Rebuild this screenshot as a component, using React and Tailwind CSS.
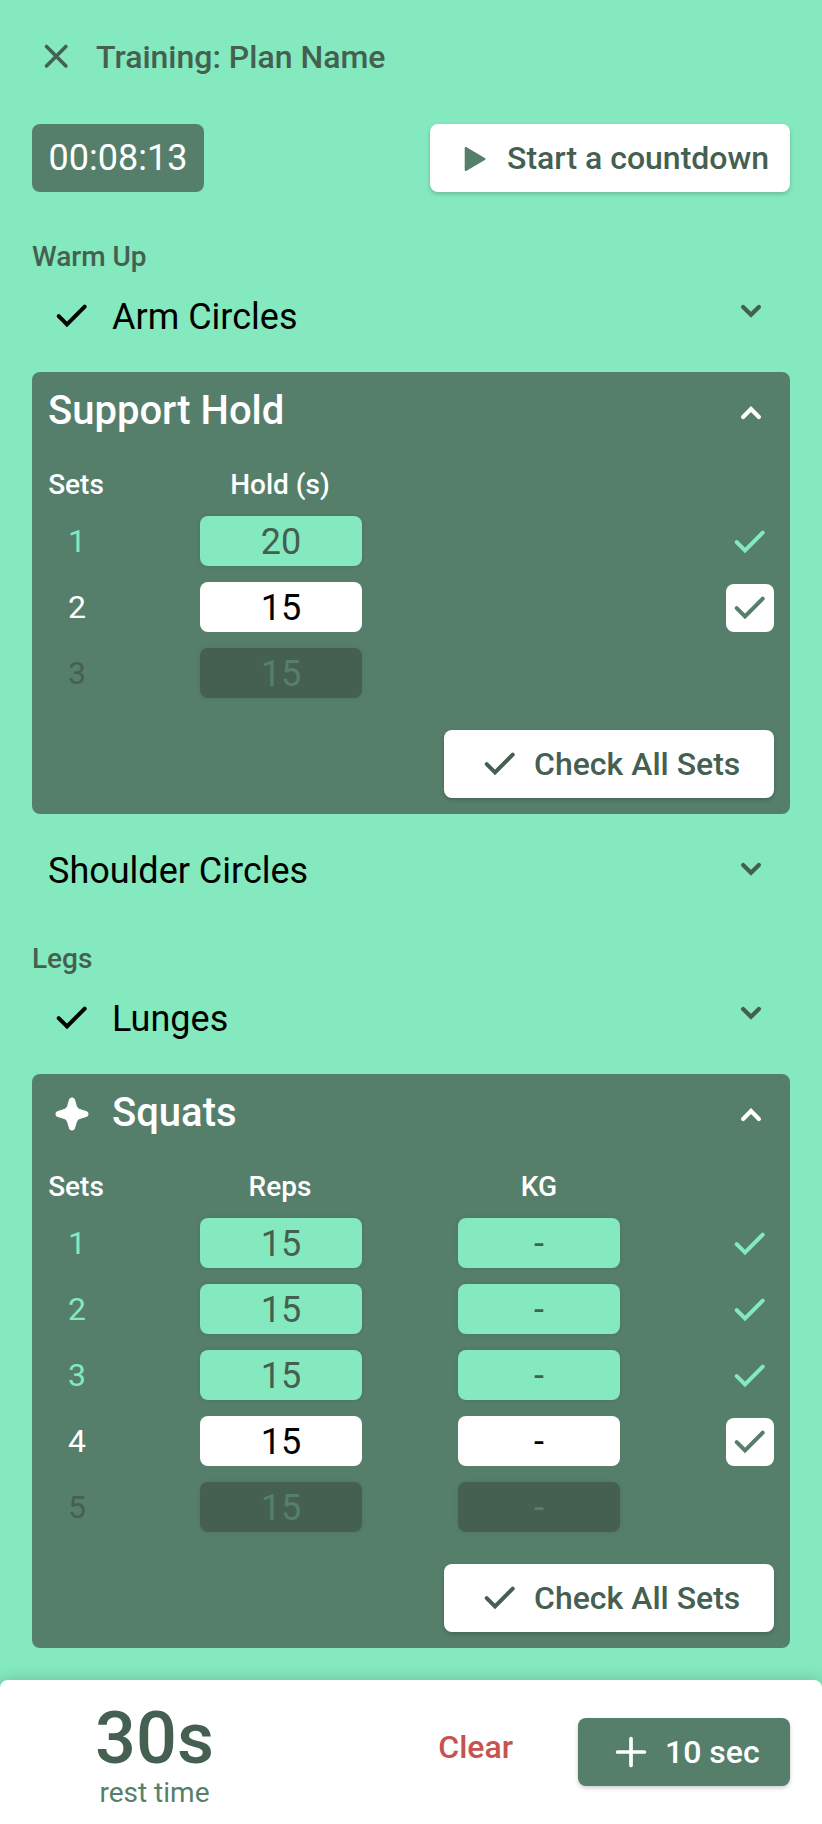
const CheckIcon = ({ className = "" }) => (
  <svg viewBox="0 0 48 48" className={`size-12 shrink-0 ${className}`} fill="none" stroke="currentColor" strokeWidth="4" strokeLinecap="round">
    <path d="M10.7 24.1L19 32.4L36.7 14.7" />
  </svg>
);

const CloseIcon = () => (
  <svg viewBox="0 0 48 48" className="size-12 shrink-0" fill="none" stroke="currentColor" strokeWidth="3.6" strokeLinecap="round">
    <path d="M14.5 14.5L33.9 33.9M33.9 14.5L14.5 33.9" />
  </svg>
);

const PlayIcon = () => (
  <svg viewBox="0 0 48 48" className="size-12 shrink-0 text-[#567f6b]" fill="currentColor" stroke="currentColor" strokeWidth="2" strokeLinejoin="round">
    <path d="M15.7 13.9V36.1L34.7 25Z" />
  </svg>
);

const PlusIcon = () => (
  <svg viewBox="0 0 48 48" className="size-12 shrink-0" fill="none" stroke="currentColor" strokeWidth="3.7" strokeLinecap="round">
    <path d="M10.6 24H37.4M24 10.6V37.4" />
  </svg>
);

const StarIcon = () => (
  <svg viewBox="0 0 48 48" className="size-12 shrink-0" fill="currentColor">
    <path d="M24 7.5C25.7 7.5 26.7 8.6 27.1 9.9L28.7 15.4C29.4 17.7 30.3 18.6 32.6 19.3L38.1 20.9C39.4 21.3 40.5 22.3 40.5 24C40.5 25.7 39.4 26.7 38.1 27.1L32.6 28.7C30.3 29.4 29.4 30.3 28.7 32.6L27.1 38.1C26.7 39.4 25.7 40.5 24 40.5C22.3 40.5 21.3 39.4 20.9 38.1L19.3 32.6C18.6 30.3 17.7 29.4 15.4 28.7L9.9 27.1C8.6 26.7 7.5 25.7 7.5 24C7.5 22.3 8.6 21.3 9.9 20.9L15.4 19.3C17.7 18.6 18.6 17.7 19.3 15.4L20.9 9.9C21.3 8.6 22.3 7.5 24 7.5Z" />
  </svg>
);

const Chevron = ({ up = false, className = "" }) => (
  <svg viewBox="0 0 48 40" className={`h-10 w-12 shrink-0 ${className}`} fill="none" stroke="currentColor" strokeWidth="4.2" strokeLinecap="round">
    <path d={up ? "M17.1 22.9L25 15L32.9 22.9" : "M17.1 14.9L25 22.8L32.9 14.9"} />
  </svg>
);

const SectionLabel = ({ children }) => (
  <h2 className="mt-12 h-8 text-[28px] leading-[34px] font-medium text-[#455f51]">{children}</h2>
);

const CollapsedExercise = ({ name, done = false, className = "" }) => (
  <div className={`flex h-12 items-center justify-between px-4 ${className}`}>
    <div className="flex h-12 items-start gap-4 text-4xl/[50px] text-black">
      {done && <CheckIcon />}
      <span>{name}</span>
    </div>
    <Chevron className={done ? "self-start text-[#455f51]" : "text-[#455f51]"} />
  </div>
);

const cellStyle = {
  done: "bg-[#84e9be] text-[#455f51] shadow-[0_0_4px_rgba(0,0,0,0.12)]",
  active: "bg-white text-black",
  pending: "bg-[#455f51] text-[#567f6b] shadow-[0_0_4px_rgba(0,0,0,0.1)]",
};

const numberStyle = {
  done: "text-[#84e9be]",
  active: "text-white",
  pending: "text-[#455f51]",
};

const grid = "grid grid-cols-[56px_162px_162px_1fr] gap-x-24";

const ExerciseCard = ({ name, star = false, columns, sets }) => (
  <section className="mt-8 rounded-lg bg-[#567f6b] p-4 text-white">
    <div className="flex h-12 items-start gap-4">
      {star && <StarIcon />}
      <h3 className="h-11 grow text-[40px] leading-[46px] font-medium">{name}</h3>
      <Chevron up className="mt-1.5" />
    </div>
    <div className={`${grid} mt-8 h-8 text-center text-[28px] leading-[34px] font-medium`}>
      <span>Sets</span>
      {columns.map((c) => (
        <span key={c} className={c === "KG" ? "" : "pr-0.5"}>{c}</span>
      ))}
    </div>
    <div className="mt-4 flex flex-col gap-4">
      {sets.map(({ state, values }, i) => (
        <div key={i} className={`${grid} h-[50px] text-center`}>
          <span className={`pl-0.5 text-[32px] leading-[50px] ${numberStyle[state]}`}>{i + 1}</span>
          {values.map((v, j) => (
            <span key={j} className={`h-[50px] rounded-lg text-4xl/[52px] ${cellStyle[state]}`}>{v}</span>
          ))}
          {state !== "pending" && (
            <span
              className={
                state === "active"
                  ? "col-start-4 size-12 self-end justify-self-end rounded-lg bg-white text-[#567f6b]"
                  : "col-start-4 size-12 self-end justify-self-end text-[#84e9be]"
              }
            >
              <CheckIcon />
            </span>
          )}
        </div>
      ))}
    </div>
    <div className="mt-8 flex justify-end">
      <button className="flex h-[68px] w-[330px] items-center gap-2.5 rounded-lg bg-white px-8 text-[32px] font-medium whitespace-nowrap text-[#455f51] shadow-[0_2px_4px_rgba(0,0,0,0.2)]">
        <CheckIcon />
        Check All Sets
      </button>
    </div>
  </section>
);

export default function App() {
  return (
    <div className="flex h-[1824px] w-[822px] flex-col overflow-hidden bg-[#84e9be] font-['Roboto',sans-serif]">
      <main className="px-8 pt-8">
        <header className="flex h-12 items-start gap-4 text-[#455f51]">
          <CloseIcon />
          <h1 className="text-[32px] leading-[50px] font-medium">Training: Plan Name</h1>
        </header>
        <div className="mt-11 flex h-[68px] justify-between">
          <div className="flex w-[172px] items-center justify-center rounded-lg bg-[#567f6b] text-4xl text-white">00:08:13</div>
          <button className="flex w-[360px] items-center gap-[9px] rounded-lg bg-white px-5 text-[32px] font-medium whitespace-nowrap text-[#455f51] shadow-[0_2px_4px_rgba(0,0,0,0.2)]">
            <PlayIcon />
            Start a countdown
          </button>
        </div>
        <SectionLabel>Warm Up</SectionLabel>
        <CollapsedExercise name="Arm Circles" done className="mt-5" />
        <ExerciseCard
          name="Support Hold"
          columns={["Hold (s)"]}
          sets={[
            { state: "done", values: ["20"] },
            { state: "active", values: ["15"] },
            { state: "pending", values: ["15"] },
          ]}
        />
        <CollapsedExercise name="Shoulder Circles" className="mt-8" />
        <SectionLabel>Legs</SectionLabel>
        <CollapsedExercise name="Lunges" done className="mt-5" />
        <ExerciseCard
          name="Squats"
          star
          columns={["Reps", "KG"]}
          sets={[
            { state: "done", values: ["15", "-"] },
            { state: "done", values: ["15", "-"] },
            { state: "done", values: ["15", "-"] },
            { state: "active", values: ["15", "-"] },
            { state: "pending", values: ["15", "-"] },
          ]}
        />
      </main>
      <footer className="mt-8 flex h-36 items-start rounded-t-lg bg-white px-8 shadow-[0_0_16px_rgba(0,0,0,0.2)]">
        <div className="w-[245px] pt-6 text-center">
          <div className="h-[73px] text-7xl/[70px] font-medium text-[#455f51]">30s</div>
          <div className="text-[28px] leading-8 text-[#567f6b]">rest time</div>
        </div>
        <button className="mt-[33px] mr-[65px] ml-auto h-[68px] text-[32px] leading-[68px] font-medium text-[#c55451]">Clear</button>
        <button className="mt-[38px] flex h-[68px] w-[212px] items-center gap-2.5 rounded-lg bg-[#567f6b] pl-[29px] text-[32px] font-medium whitespace-nowrap text-white shadow-[0_2px_4px_rgba(0,0,0,0.2)]">
          <PlusIcon />
          10 sec
        </button>
      </footer>
    </div>
  );
}
